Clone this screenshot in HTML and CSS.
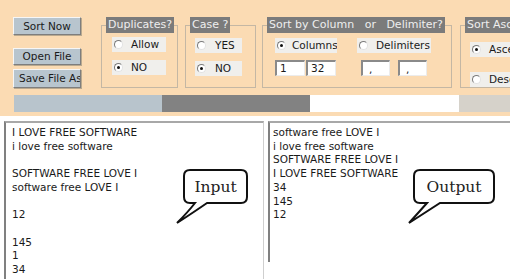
FILE: index.html
```html
<!DOCTYPE html>
<html lang="en">
<head>
    <meta charset="UTF-8">
    <title>Sort Lines</title>
    <link rel="stylesheet" href="styles.css">
</head>
<body>

<div class="panel">
    <div class="controls">
        <div class="buttons">
            <div class="btn sort">Sort Now</div>
            <div class="btn open">Open File</div>
            <div class="btn save">Save File As</div>
        </div>

        <fieldset class="group dup">
            <legend>Duplicates?</legend>
            <div class="radio"><span class="dot"></span>Allow</div>
            <div class="radio"><span class="dot on"></span>NO</div>
        </fieldset>

        <fieldset class="group case">
            <legend>Case ?</legend>
            <div class="radio"><span class="dot"></span>YES</div>
            <div class="radio"><span class="dot on"></span>NO</div>
        </fieldset>

        <fieldset class="group sortby">
            <legend>Sort by Column   or   Delimiter?</legend>
            <div class="cols">
                <div class="col">
                    <div class="radio wide-a"><span class="dot on"></span>Columns</div>
                    <div class="inputs">
                        <div class="field">1</div>
                        <div class="field">32</div>
                    </div>
                </div>
                <div class="col delim">
                    <div class="radio wide-b"><span class="dot"></span>Delimiters</div>
                    <div class="inputs">
                        <div class="field comma">,</div>
                        <div class="field comma">,</div>
                    </div>
                </div>
            </div>
        </fieldset>

        <fieldset class="group order">
            <legend>Sort Ascending?</legend>
            <div class="radio"><span class="dot on"></span>Ascending</div>
            <div class="radio"><span class="dot"></span>Descending</div>
        </fieldset>
    </div>

    <div class="progress">
        <div class="seg seg1"></div>
        <div class="seg seg2"></div>
        <div class="seg seg3"></div>
        <div class="seg seg4"></div>
    </div>
</div>

<div class="editors">
    <div class="editor left">
<pre class="text">I LOVE FREE SOFTWARE
i love free software

SOFTWARE FREE LOVE I
software free LOVE I

12

145
1
34</pre>
        <svg class="callout callout-in" width="76" height="58" viewBox="0 0 76 58">
            <path d="M16 2 H67 Q73 2 73 8 V29 Q73 35 67 35 H33 Q20 44 3 55 Q14 44 21 35 H16 Q10 35 10 29 V8 Q10 2 16 2 Z" fill="#fff" stroke="#111" stroke-width="2"/>
            <text x="41.5" y="24" text-anchor="middle">Input</text>
        </svg>
    </div>
    <div class="editor right">
<pre class="text">software free LOVE I
i love free software
SOFTWARE FREE LOVE I
I LOVE FREE SOFTWARE
34
145
12</pre>
        <svg class="callout callout-out" width="92" height="58" viewBox="0 0 92 58">
            <path d="M14 2 H82 Q88 2 88 8 V29 Q88 35 82 35 H34 Q20 44 3 55 Q13 44 21 35 H14 Q8 35 8 29 V8 Q8 2 14 2 Z" fill="#fff" stroke="#111" stroke-width="2"/>
            <text x="48" y="24" text-anchor="middle">Output</text>
        </svg>
    </div>
</div>

</body>
</html>
```

FILE: styles.css
```css
body {
    margin: 0;
    background-color: #ffffff;
    font-family: "DejaVu Sans", sans-serif;
    font-size: 10.5px;
    color: #1a1a1a;
    overflow: hidden;
}

.panel {
    background-color: #fbdbb3;
    height: 116px;
    box-sizing: border-box;
    padding: 17px 0 0 13px;
    overflow: hidden;
}

.controls {
    display: flex;
    align-items: flex-start;
    height: 78px;
}

/* buttons */
.buttons {
    width: 68px;
    display: flex;
    flex-direction: column;
}

.btn {
    background-color: #b8c5ce;
    border: 1px solid;
    border-color: #f6f6f6 #7e7e7e #7e7e7e #f6f6f6;
    box-shadow: 1px 1px 0 #b9a98f;
    box-sizing: border-box;
    text-align: center;
    white-space: nowrap;
    overflow: hidden;
    padding: 0 3px;
}

.sort { height: 18px; line-height: 16px; }
.open { height: 17px; line-height: 15px; margin-top: 13px; }
.save { height: 19px; line-height: 17px; margin-top: 4px; text-align: left; padding-left: 5px; }

/* groups */
.group {
    margin: 0;
    padding: 0;
    border: 1px solid #c4b7a4;
    height: 71px;
    box-sizing: border-box;
    flex-shrink: 0;
}

.group legend {
    background-color: #7b7b7b;
    color: #eeeeee;
    height: 16px;
    line-height: 16px;
    padding: 0 2px;
    margin-left: 4px;
    white-space: pre;
    font-size: 11px;
}

.dup { width: 77px; margin-left: 20px; }
.case { width: 71px; margin-left: 7px; }
.sortby { width: 190px; margin-left: 6px; }
.order { width: 130px; margin-left: 8px; }

.radio {
    background-color: #f0efec;
    height: 15px;
    line-height: 15px;
    display: flex;
    align-items: center;
    white-space: nowrap;
    overflow: hidden;
}

.dot {
    width: 7px;
    height: 7px;
    border-radius: 50%;
    border: 1px solid;
    border-color: #7a7a7a #e2e2e2 #e2e2e2 #7a7a7a;
    background-color: #ffffff;
    margin: 0 8px 0 2px;
    position: relative;
    flex-shrink: 0;
}

.dot.on::after {
    content: "";
    position: absolute;
    left: 2px;
    top: 2px;
    width: 3px;
    height: 3px;
    border-radius: 50%;
    background-color: #111;
}

.dup .radio {
    width: 54px;
    margin: 4px 0 0 10px;
}

.dup .radio + .radio { margin-top: 8px; }

.case .radio {
    width: 47px;
    margin: 5px 0 0 9px;
}

.case .dot { margin-right: 9px; }
.case .radio + .radio { margin-top: 8px; }

.order .radio {
    width: 110px;
    margin: 9px 0 0 9px;
}

.order .radio + .radio { margin-top: 15px; }

/* sort by column */
.cols {
    display: flex;
    margin-top: 5px;
}

.col { margin-left: 12px; }
.col.delim { margin-left: 20px; }

.wide-a { width: 62px; }
.wide-a .dot { margin-right: 6px; }
.wide-b { width: 74px; }

.inputs {
    display: flex;
    gap: 1px;
    margin-top: 7px;
}

.delim .inputs {
    gap: 8px;
    margin-left: 4px;
}

.field {
    width: 30px;
    height: 16px;
    box-sizing: border-box;
    background-color: #ffffff;
    border: 1px solid;
    border-color: #8a8a8a #ececec #ececec #8a8a8a;
    border-width: 2px 1px 1px 2px;
    line-height: 13px;
    padding-left: 3px;
}

.delim .field { width: 29px; }
.field.comma { line-height: 14px; padding-left: 6px; }

/* progress strip */
.progress {
    display: flex;
    height: 17px;
    margin-left: 1px;
}

.seg1 { width: 148px; background-color: #b8c4cc; }
.seg2 { width: 148px; background-color: #828282; }
.seg3 { width: 149px; background-color: #ffffff; }
.seg4 { flex: 1; background-color: #d6d2ca; }

/* editors */
.editors {
    display: flex;
    margin-top: 5px;
}

.editor {
    position: relative;
    background-color: #ffffff;
    box-sizing: border-box;
    border-top: 2px solid #a8a8a8;
    border-left: 2px solid #808080;
}

.editor.left {
    width: 260px;
    height: 170px;
    margin-left: 4px;
    border-right: 1px solid #cfcfcf;
}

.editor.right {
    flex: 1;
    height: 141px;
    margin-left: 4px;
}

.text {
    margin: 0;
    font-family: "DejaVu Sans", sans-serif;
    font-size: 10.5px;
    line-height: 13.7px;
    color: #1a1a1a;
}

.left .text { padding: 3px 0 0 6px; }
.right .text { padding: 3px 0 0 3px; }

.callout {
    position: absolute;
    font-family: "DejaVu Serif", serif;
    font-size: 15.5px;
}

.callout text { fill: #222; }

.callout-in { left: 168px; top: 45px; }
.callout-out { left: 136px; top: 45px; }
```
